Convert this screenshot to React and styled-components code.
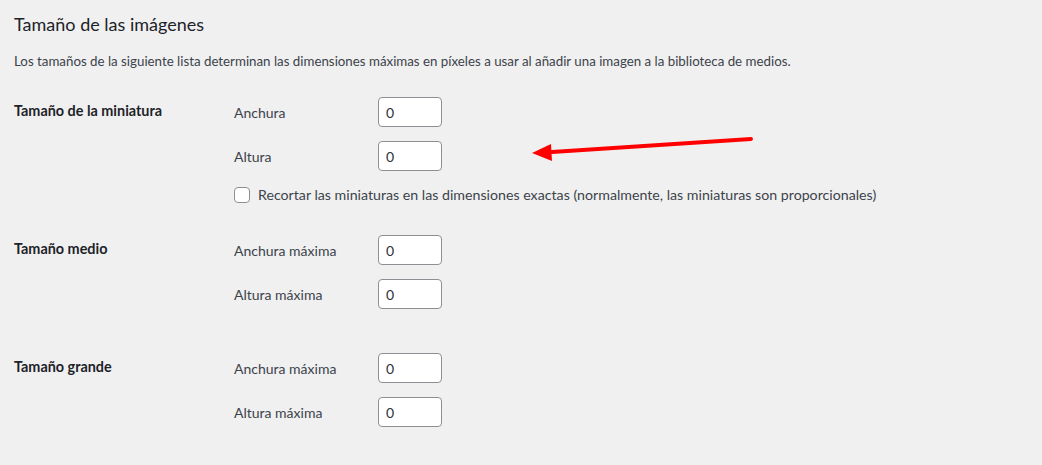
import React from 'react';
import styled, { createGlobalStyle } from 'styled-components';

const GlobalStyle = createGlobalStyle`
  html, body {
    margin: 0;
    padding: 0;
    background: #f0f0f1;
  }
  body {
    font-family: Lato, "Noto Sans", sans-serif;
    color: #3c434a;
    font-size: 13px;
  }
`;

const Page = styled.div`
  position: relative;
  width: 1042px;
  height: 465px;
  padding: 13px 14px 0;
  box-sizing: border-box;
  overflow: hidden;
`;

const Title = styled.h2`
  margin: 0;
  font-size: 18px;
  font-weight: 400;
  line-height: 23px;
  color: #1d2327;
`;

const Intro = styled.p`
  margin: 15px 0 0;
  font-size: 13.3px;
  line-height: 20px;
  color: #3c434a;
`;

const Section = styled.div`
  display: flex;
  margin-top: ${p => p.$top}px;
`;

const Heading = styled.div`
  width: 220px;
  flex: none;
  padding-top: 4px;
  font-size: 14.4px;
  font-weight: 700;
  line-height: 20px;
  color: #1d2327;
`;

const Fields = styled.div`
  display: flex;
  flex-direction: column;
  gap: 14px;
`;

const FieldRow = styled.div`
  display: flex;
  align-items: center;
  height: 30px;
`;

const Label = styled.label`
  width: 144px;
  font-size: 14px;
  color: #3c434a;
`;

const NumberInput = styled.input`
  width: 64px;
  height: 30px;
  box-sizing: border-box;
  border: 1px solid #8c8f94;
  border-radius: 4px;
  background: #fff;
  padding: 0 7px;
  font-family: inherit;
  font-size: 14px;
  color: #2c3338;
`;

const CheckRow = styled.label`
  display: flex;
  align-items: center;
  gap: 8px;
  margin-top: 1px;
  font-size: 14.2px;
  color: #3c434a;
`;

const Box = styled.span`
  width: 16px;
  height: 16px;
  box-sizing: border-box;
  border: 1px solid #8c8f94;
  border-radius: 4px;
  background: #fff;
`;

const Arrow = styled.svg`
  position: absolute;
  left: 520px;
  top: 128px;
`;

const Field = ({ label }) => (
  <FieldRow>
    <Label>{label}</Label>
    <NumberInput type="text" defaultValue="0" />
  </FieldRow>
);

export default function App() {
  return (
    <Page>
      <GlobalStyle />
      <Title>Tamaño de las imágenes</Title>
      <Intro>
        Los tamaños de la siguiente lista determinan las dimensiones máximas en píxeles a usar al añadir una imagen a la biblioteca de medios.
      </Intro>

      <Section $top={26}>
        <Heading>Tamaño de la miniatura</Heading>
        <Fields>
          <Field label="Anchura" />
          <Field label="Altura" />
          <CheckRow>
            <Box />
            Recortar las miniaturas en las dimensiones exactas (normalmente, las miniaturas son proporcionales)
          </CheckRow>
        </Fields>
      </Section>

      <Section $top={32}>
        <Heading>Tamaño medio</Heading>
        <Fields>
          <Field label="Anchura máxima" />
          <Field label="Altura máxima" />
        </Fields>
      </Section>

      <Section $top={44}>
        <Heading>Tamaño grande</Heading>
        <Fields>
          <Field label="Anchura máxima" />
          <Field label="Altura máxima" />
        </Fields>
      </Section>

      <Arrow width="240" height="40" viewBox="0 0 240 40">
        <line x1="231" y1="11" x2="32" y2="24" stroke="#ff0000" strokeWidth="4" strokeLinecap="round" />
        <polygon points="12,25 31,16 32,33" fill="#ff0000" />
      </Arrow>
    </Page>
  );
}
